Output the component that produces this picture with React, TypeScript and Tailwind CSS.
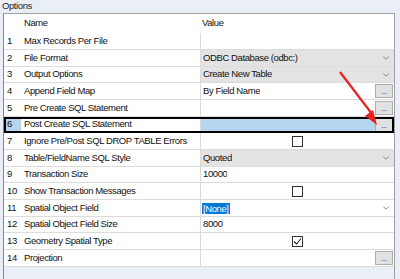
import { ChevronDown } from 'lucide-react';

type Kind = 'text' | 'combo' | 'button' | 'check' | 'select';

interface Row {
    name: string;
    value?: string;
    kind?: Kind;
    checked?: boolean;
}

const rows: Row[] = [
    { name: 'Max Records Per File' },
    { name: 'File Format', value: 'ODBC Database (odbc:)', kind: 'combo' },
    { name: 'Output Options', value: 'Create New Table', kind: 'combo' },
    { name: 'Append Field Map', value: 'By Field Name', kind: 'button' },
    { name: 'Pre Create SQL Statement', kind: 'button' },
    { name: 'Post Create SQL Statement', kind: 'button' },
    { name: 'Ignore Pre/Post SQL DROP TABLE Errors', kind: 'check' },
    { name: 'Table/FieldName SQL Style', value: 'Quoted', kind: 'combo' },
    { name: 'Transaction Size', value: '10000' },
    { name: 'Show Transaction Messages', kind: 'check' },
    { name: 'Spatial Object Field', value: '[None]', kind: 'select' },
    { name: 'Spatial Object Field Size', value: '8000' },
    { name: 'Geometry Spatial Type', kind: 'check', checked: true },
    { name: 'Projection', kind: 'button' },
];

const SELECTED = 5;

function DotsButton() {
    return (
        <div className="ml-auto mr-[1px] w-[18px] h-[14px] bg-[#e1e1e1] border border-[#adadad] flex items-end justify-center pb-[1px] text-[8px] leading-[8px] text-[#333]">
            ...
        </div>
    );
}

function CheckBox({ checked }: { checked?: boolean }) {
    return (
        <div className="w-[11px] h-[11px] bg-white border border-[#333] flex items-center justify-center">
            {checked && (
                <svg width="9" height="9" viewBox="0 0 9 9">
                    <path d="M1 4.5 L3.5 7 L8 1.5" fill="none" stroke="#222" strokeWidth="1.1" />
                </svg>
            )}
        </div>
    );
}

function ValueCell({ row, selected }: { row: Row; selected: boolean }) {
    const kind = row.kind ?? 'text';
    const bg = selected ? 'bg-[#b5d5f0]' : kind === 'combo' ? 'bg-[#e3e3e3]' : 'bg-white';

    return (
        <div className={`w-[194px] h-full border-l border-[#d9d9d9] flex items-center ${bg}`}>
            {kind === 'check' ? (
                <div className="flex-1 flex justify-center">
                    <CheckBox checked={row.checked} />
                </div>
            ) : (
                <>
                    {kind === 'select' ? (
                        <span className="ml-[1px] px-[1px] bg-[#0078d7] text-white leading-[11px]">{row.value}</span>
                    ) : (
                        <span className="pl-[2px] truncate">{row.value}</span>
                    )}
                    {(kind === 'combo' || kind === 'select') && (
                        <ChevronDown className="ml-auto mr-[3px] w-[10px] h-[10px] text-[#333]" strokeWidth={1.3} />
                    )}
                    {kind === 'button' && <DotsButton />}
                </>
            )}
        </div>
    );
}

export default function App() {
    return (
        <div className="relative w-[400px] h-[279px] overflow-hidden bg-[#eaeef7] text-[9.5px] tracking-[-0.4px] text-[#111] font-['Liberation_Sans',Arial,sans-serif]">
            <div className="h-[13px] pl-[2px] leading-[11px] text-[#222]">Options</div>

            <div className="ml-[3px] w-[392px] h-[270px] border-l border-t border-r border-l-[#828790] border-t-[#a0a0a0] border-r-[#a0a0a0] bg-[#eaeef7]">
                <div className="h-[19px] flex bg-white">
                    <div className="w-[196px] pl-[20px] flex items-center">Name</div>
                    <div className="flex-1 pl-[2px] flex items-center">Value</div>
                </div>

                {rows.map((row, index) => {
                    const selected = index === SELECTED;
                    const short = index % 3 === 2;
                    return (
                        <div
                            key={index}
                            className={`flex bg-white border-b border-[#dcdcdc] ${short ? 'h-[16px]' : 'h-[17px]'} ${selected ? 'outline-2 -outline-offset-2 outline-black' : ''}`}
                        >
                            <div className={`w-[17px] pl-[3px] flex items-center ${selected ? 'bg-[#b5d5f0]' : ''}`}>{index + 1}</div>
                            <div className="w-[179px] pl-[3px] flex items-center whitespace-nowrap">{row.name}</div>
                            <ValueCell row={row} selected={selected} />
                        </div>
                    );
                })}
            </div>

            <svg className="absolute left-0 top-0 pointer-events-none" width="400" height="279">
                <line x1="340" y1="72" x2="372" y2="114" stroke="#e8231f" strokeWidth="2.2" />
                <path d="M377 125 L365 116 L373 110 Z" fill="#e8231f" />
            </svg>
        </div>
    );
}
